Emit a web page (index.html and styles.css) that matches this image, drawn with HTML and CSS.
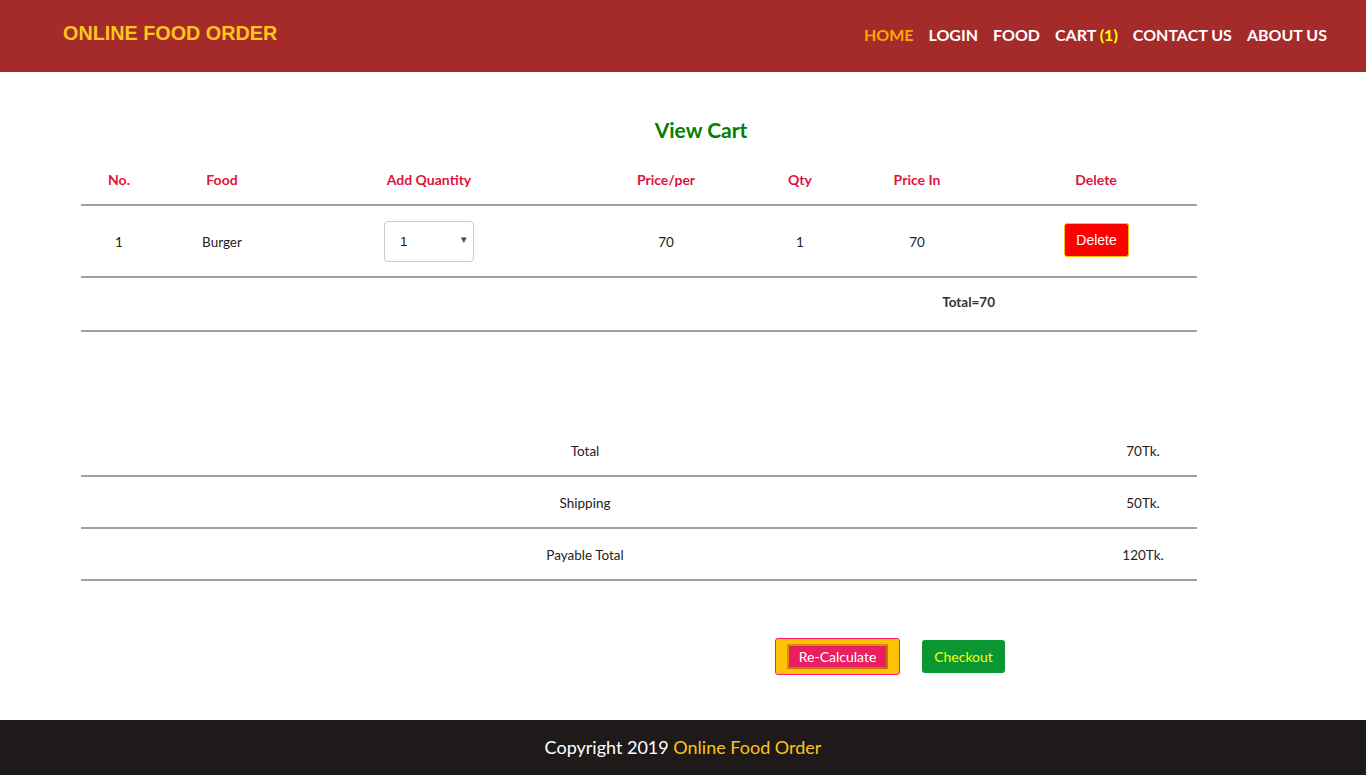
FILE: index.html
```html
<!DOCTYPE html>
<html>
<head>
<meta charset="utf-8">
<title>Online Food Order - Cart</title>
<link rel="stylesheet" href="styles.css">
</head>
<body>
<header class="topbar">
  <div class="logo">ONLINE FOOD ORDER</div>
  <nav class="nav">
    <a class="nav-link active" href="#">HOME</a>
    <a class="nav-link" href="#">LOGIN</a>
    <a class="nav-link" href="#">FOOD</a>
    <a class="nav-link" href="#">CART <span class="cart-count">(1)</span></a>
    <a class="nav-link" href="#">CONTACT US</a>
    <a class="nav-link" href="#">ABOUT US</a>
  </nav>
</header>

<main class="main">
  <h2 class="page-title">View Cart</h2>

  <table class="cart-table">
    <colgroup>
      <col class="c1"><col class="c2"><col class="c3"><col class="c4"><col class="c5"><col class="c6"><col class="c7">
    </colgroup>
    <thead>
      <tr>
        <th>No.</th>
        <th>Food</th>
        <th>Add Quantity</th>
        <th>Price/per</th>
        <th>Qty</th>
        <th>Price In</th>
        <th>Delete</th>
      </tr>
    </thead>
    <tbody>
      <tr class="item-row">
        <td>1</td>
        <td>Burger</td>
        <td>
          <div class="qty-select">
            <span>1</span>
            <span class="caret">&#9662;</span>
          </div>
        </td>
        <td>70</td>
        <td>1</td>
        <td>70</td>
        <td><button class="btn-delete">Delete</button></td>
      </tr>
      <tr class="total-row">
        <td></td><td></td><td></td><td></td><td></td>
        <td class="total-cell">Total=70</td>
        <td></td>
      </tr>
    </tbody>
  </table>

  <table class="summary-table">
    <tr><td class="s-label">Total</td><td class="s-value">70Tk.</td></tr>
    <tr><td class="s-label">Shipping</td><td class="s-value">50Tk.</td></tr>
    <tr><td class="s-label">Payable Total</td><td class="s-value">120Tk.</td></tr>
  </table>

  <div class="actions">
    <div class="recalc-wrap"><button class="btn-recalc">Re-Calculate</button></div>
    <button class="btn-checkout">Checkout</button>
  </div>
</main>

<footer class="footer">
  Copyright 2019 <span class="brand">Online Food Order</span>
</footer>
</body>
</html>
```

FILE: styles.css
```css
* { box-sizing: border-box; }
html, body { margin: 0; padding: 0; }
body {
  font-family: "Lato", "Open Sans", sans-serif;
  color: #222;
  background: #fff;
  width: 1366px;
  height: 775px;
  overflow: hidden;
  display: flex;
  flex-direction: column;
}

.topbar {
  height: 72px;
  background: #a52a2a;
  display: flex;
  align-items: center;
  justify-content: space-between;
  padding: 0 39px 0 63px;
  flex: none;
}
.logo {
  font-family: "Liberation Sans", Arial, sans-serif;
  font-weight: 700;
  font-size: 19.8px;
  color: #fcc61c;
  margin-top: -5px;
}
.nav { display: flex; gap: 15px; margin-top: -3px; }
.nav-link {
  color: #fff;
  text-decoration: none;
  font-weight: 700;
  font-size: 16px;
}
.nav-link.active { color: #ffa500; }
.cart-count { color: #ffff00; }

.main { flex: 1; padding: 0 0 0 81px; }
.page-title {
  margin: 44px 0 0 0;
  padding-left: 36px;
  width: 1204px;
  text-align: center;
  color: #008000;
  font-size: 21px;
  font-weight: 700;
  line-height: 28px;
}

.cart-table, .summary-table {
  width: 1116px;
  border-collapse: collapse;
  font-size: 13.5px;
}
.cart-table { margin-top: 16px; }
.c1 { width: 76px; } .c2 { width: 130px; } .c3 { width: 284px; } .c4 { width: 190px; }
.c5 { width: 78px; } .c6 { width: 156px; } .c7 { width: 202px; }
.cart-table th {
  color: #dc143c;
  font-weight: 700;
  font-size: 14px;
  height: 45px;
  padding: 0 0 6px 0;
  text-align: center;
  border-bottom: 2px solid #a0a0a0;
}
.cart-table td { text-align: center; padding: 0; }
.item-row td { height: 72px; border-bottom: 2px solid #a0a0a0; padding-top: 1px; }
.total-row td { height: 54px; border-bottom: 2px solid #a0a0a0; padding-bottom: 4px; }
.cart-table td.total-cell { text-align: right; font-weight: 700; color: #333; }

.qty-select {
  width: 90px;
  height: 41px;
  margin: -1px 0 0 97px;
  border: 1px solid #ccc;
  border-radius: 4px;
  display: flex;
  align-items: center;
  justify-content: space-between;
  padding: 0 6px 0 15px;
  font-family: "Liberation Sans", Arial, sans-serif;
  font-size: 13.5px;
}
.caret { font-size: 11px; color: #444; margin-top: -4px; }

.btn-delete {
  background: #ff0000;
  color: #fff;
  border: 1px solid #ffc107;
  border-radius: 3px;
  font-family: "Liberation Sans", Arial, sans-serif;
  font-size: 14px;
  width: 65px;
  height: 34px;
  padding: 0;
  margin-top: -3px;
  margin-left: 1px;
}

.summary-table { margin-top: 92px; }
.summary-table td {
  height: 52px;
  text-align: center;
  padding: 2px 0 0 0;
}
.summary-table tr:not(:first-child) td { border-top: 2px solid #a0a0a0; }
.summary-table tr:last-child td { border-bottom: 2px solid #a0a0a0; }
.s-label { width: 1008px; }
.s-value { width: 108px; }

.actions {
  display: flex;
  align-items: center;
  gap: 22px;
  margin-top: 57px;
  padding-left: 694px;
}
.recalc-wrap {
  background: #ffc107;
  border: 1px solid #ff1a66;
  border-radius: 3px;
  width: 125px;
  height: 37px;
  display: flex;
  align-items: center;
  justify-content: center;
}
.btn-recalc {
  background: #e91e63;
  color: #fff;
  border: 2px solid #c77800;
  border-top-color: #d98c00;
  border-left-color: #d98c00;
  font-family: inherit;
  font-size: 14px;
  width: 101px;
  height: 25px;
  padding: 0;
}
.btn-checkout {
  background: #0a9633;
  color: #ffff00;
  border: none;
  border-radius: 3px;
  font-family: inherit;
  font-size: 14px;
  width: 83px;
  height: 33px;
  padding: 0;
}

.footer {
  flex: none;
  height: 55px;
  background: #1e1a1a;
  color: #fff;
  text-align: center;
  font-size: 18px;
  line-height: 55px;
}
.footer .brand { color: #fcc419; }
```
